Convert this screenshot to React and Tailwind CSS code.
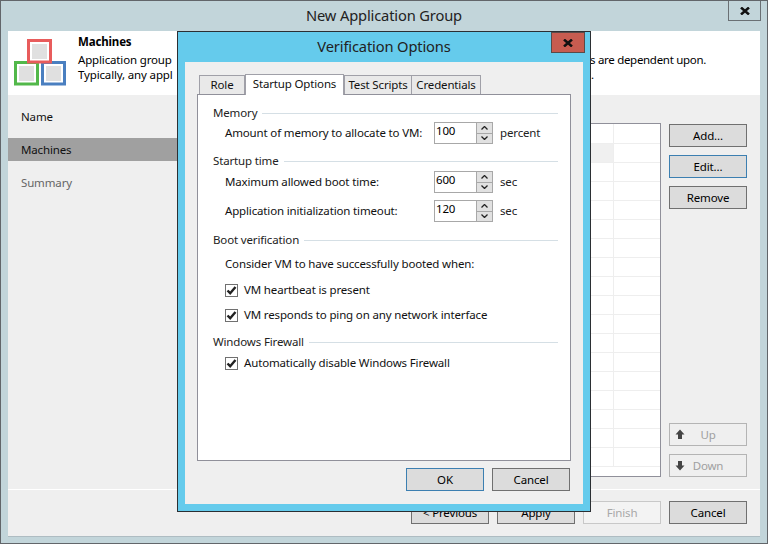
import React from "react"

const looks = {
  normal: "bg-[#dcdcdc] border-[#707070] text-black",
  focus: "bg-[#dcdcdc] border-[#3c7fb1] text-black",
  off: "bg-[#efefef] border-[#b4b4b4] text-[#a0a0a0]",
  finish: "bg-[#f3f3f3] border-[#c8c8c8] text-[#a8a8a8]",
}

const Btn = ({ children, look = "normal" }) => (
  <div className={"relative w-[78px] h-[23px] shrink-0 flex items-center justify-center border text-[11.5px] " + looks[look]}>
    {children}
  </div>
)

const Spin = ({ value }) => (
  <div className="w-[59px] h-[22px] flex border border-[#a8a8a8] bg-white">
    <span className="flex-1 pl-[1px] leading-[15px] text-[11.5px] text-black">{value}</span>
    <div className="w-[16px] flex flex-col bg-[#a8a8a8] gap-px border-l border-[#a8a8a8]">
      <div className="flex-1 bg-[#e1e1e1] flex items-center justify-center">
        <svg width="7" height="4" viewBox="0 0 7 4"><path d="M0.5 3.5 L3.5 0.5 L6.5 3.5" fill="none" stroke="#222" strokeWidth="1.3" /></svg>
      </div>
      <div className="flex-1 bg-[#e1e1e1] flex items-center justify-center">
        <svg width="7" height="4" viewBox="0 0 7 4"><path d="M0.5 0.5 L3.5 3.5 L6.5 0.5" fill="none" stroke="#222" strokeWidth="1.3" /></svg>
      </div>
    </div>
  </div>
)

const Section = ({ title, className = "" }) => (
  <div className={"flex items-center gap-[5px] h-[16px] " + className}>
    <span className="text-[11.5px] text-[#222]">{title}</span>
    <div className="flex-1 h-px bg-[#d5dfe5]" />
  </div>
)

const SpinRow = ({ label, value, unit, className = "" }) => (
  <div className={"flex items-center h-[22px] pl-[12px] " + className}>
    <span className="w-[209px] whitespace-nowrap text-[11.5px] text-[#111]">{label}</span>
    <Spin value={value} />
    <span className="ml-[7px] text-[11.5px] text-[#222]">{unit}</span>
  </div>
)

const Check = ({ label, className = "" }) => (
  <div className={"flex items-center gap-[6px] h-[16px] pl-[12px] " + className}>
    <div className="w-[13px] h-[13px] border border-[#707070] bg-white flex items-center justify-center">
      <svg width="11" height="11" viewBox="0 0 11 11"><path d="M1.5 5.5 L4.2 8.2 L9.5 2" fill="none" stroke="#222" strokeWidth="2.4" /></svg>
    </div>
    <span className="text-[11.5px] text-[#111]">{label}</span>
  </div>
)

// three stacked boxes
const Box = ({ x, y, color }) => (
  <g>
    <rect x={x + 1.5} y={y + 1.5} width="22" height="21.5" fill="white" stroke={color} strokeWidth="3" />
    <rect x={x + 5} y={y + 5} width="15" height="15" fill="#e0e0e0" />
  </g>
)

const Logo = () => (
  <svg width="52" height="47" viewBox="0 0 52 47">
    <Box x={0} y={22} color="#52b84a" />
    <Box x={27} y={22} color="#4a7fc0" />
    <Box x={13} y={0} color="#e85c5c" />
  </svg>
)

const Tab = ({ children, className = "" }) => (
  <div className={"h-[19px] flex items-center justify-center bg-[#e9e9e9] border border-b-0 border-[#a0a0a8] text-[11.5px] text-[#111] " + className}>
    {children}
  </div>
)

const CloseX = () => (
  <svg width="10" height="8" viewBox="0 0 10 8"><path d="M1 0.5 L9 7.5 M9 0.5 L1 7.5" stroke="#111" strokeWidth="2.5" /></svg>
)

const Dialog = () => (
  <div className="absolute left-[176px] top-[30px] w-[414px] h-[481px] border border-[#2b2f33] bg-[#65cbec] flex flex-col px-[7px] pb-[7px]">
    <div className="relative h-[30px] shrink-0 flex items-center justify-center pb-[2px] text-[14.7px] text-[#222]">
      Verification Options
      <div className="absolute right-[-2px] top-0 w-[34px] h-[21px] bg-[#c75c50] border border-[#5a4a48] flex items-center justify-center">
        <CloseX />
      </div>
    </div>
    <div className="flex-1 bg-[#efefef] px-[12px] flex flex-col">
      <div className="flex items-end h-[32px] shrink-0 pl-[2px]">
        <Tab className="w-[46px]">Role</Tab>
        <div className="relative z-10 w-[99px] h-[21px] mb-[-1px] bg-white border border-b-0 border-[#a0a0a8] flex items-start justify-center text-[11.5px] text-[#111]">Startup Options</div>
        <Tab className="w-[68px]">Test Scripts</Tab>
        <Tab className="w-[70px] ml-[-1px]">Credentials</Tab>
      </div>
      <div className="h-[367px] shrink-0 bg-white border border-[#90909a] pl-[15px] pr-[12px] pt-[10px]">
        <Section title="Memory" />
        <SpinRow label="Amount of memory to allocate to VM:" value="100" unit="percent" className="mt-[1px]" />
        <Section title="Startup time" className="mt-[9px]" />
        <SpinRow label="Maximum allowed boot time:" value="600" unit="sec" className="mt-[2px]" />
        <SpinRow label="Application initialization timeout:" value="120" unit="sec" className="mt-[7px]" />
        <Section title="Boot verification" className="mt-[10px]" />
        <div className="pl-[12px] mt-[7px] h-[16px] text-[11.5px] text-[#111]">Consider VM to have successfully booted when:</div>
        <Check label="VM heartbeat is present" className="mt-[11px]" />
        <Check label="VM responds to ping on any network interface" className="mt-[9px]" />
        <Section title="Windows Firewall" className="mt-[11px]" />
        <Check label="Automatically disable Windows Firewall" className="mt-[5px]" />
      </div>
      <div className="flex justify-end gap-[8px] pt-[7px] pr-[1px]">
        <Btn look="focus">OK</Btn>
        <Btn>Cancel</Btn>
      </div>
    </div>
  </div>
)

const rows = Array.from({ length: 18 })

const App = () => {
  return (
    <div className="relative w-[768px] h-[544px] bg-[#c2d5da] border border-[#62666a] px-[7px] pb-[6px] flex flex-col overflow-hidden font-['Noto_Sans',sans-serif] tracking-[-0.15px]">
      <div className="relative h-[30px] shrink-0 flex items-center justify-center pb-[2px] text-[14.7px] text-[#222]">
        New Application Group
        <div className="absolute right-[-1px] top-[-1px] w-[33px] h-[21px] bg-[#c2d5da] border border-[#6a7074] flex items-center justify-center">
          <CloseX />
        </div>
      </div>
      <div className="flex-1 flex flex-col bg-[#efefef] border-b border-[#aebcc2]">
        <div className="h-[64px] bg-white flex shrink-0">
          <div className="w-[70px] pl-[6px] pt-[8px]"><Logo /></div>
          <div className="text-[11.5px] leading-[15px] text-black pt-[3px]">
            <div className="font-bold">Machines</div>
            <div className="mt-[3px]">Application group</div>
            <div>Typically, any appl</div>
          </div>
          <div className="ml-auto w-[175px] pl-[5px] pt-[21px] text-[11.5px] leading-[15px] tracking-[-0.3px] text-black">
            <div>s are dependent upon.</div>
            <div className="pl-[1px]">.</div>
          </div>
        </div>
        <div className="flex-1 flex">
          <div className="w-[169px] pt-[10px] text-[11.5px] text-[#111]">
            <div className="h-[24px] pl-[13px] flex items-center">Name</div>
            <div className="h-[23px] mt-[9px] pl-[13px] flex items-center bg-[#a0a0a0]">Machines</div>
            <div className="h-[24px] mt-[10px] pl-[13px] flex items-center text-[#666]">Summary</div>
          </div>
          <div className="flex-1 flex pt-[28px] pr-[13px] gap-[8px]">
            <div className="w-[484px] h-[354px] ml-auto bg-white border border-[#90909a] overflow-hidden flex flex-col">
              {rows.map((_, i) => (
                <div key={i} className={"shrink-0 border-b border-[#eeeeee] flex " + (i === 0 ? "h-[20px]" : "h-[19px]")}>
                  <div className={"flex-1 " + (i === 1 ? "bg-[#f0f0f0]" : "")} />
                  <div className="w-[47px] border-l border-[#eeeeee]" />
                </div>
              ))}
            </div>
            <div className="w-[78px] flex flex-col gap-[8px] pt-[1px] pb-[12px]">
              <Btn>Add...</Btn>
              <Btn look="focus">Edit...</Btn>
              <Btn>Remove</Btn>
              <div className="flex-1" />
              <Btn look="off">
                <svg className="absolute left-[5px] top-[5px]" width="10" height="11" viewBox="0 0 10 11"><path d="M5 0.5 L9.5 5.5 H7 V10 H3 V5.5 H0.5 Z" fill="#444" /></svg>
                Up
              </Btn>
              <Btn look="off">
                <svg className="absolute left-[5px] top-[5px]" width="10" height="11" viewBox="0 0 10 11"><path d="M5 10.5 L9.5 5.5 H7 V1 H3 V5.5 H0.5 Z" fill="#444" /></svg>
                Down
              </Btn>
            </div>
          </div>
        </div>
        <div className="h-px bg-white shrink-0" />
        <div className="h-[46px] shrink-0 flex justify-end gap-[8px] pt-[11px] pr-[13px]">
          <Btn>&lt; Previous</Btn>
          <Btn>Apply</Btn>
          <Btn look="finish">Finish</Btn>
          <Btn>Cancel</Btn>
        </div>
      </div>
      <Dialog />
    </div>
  )
}

export default App
